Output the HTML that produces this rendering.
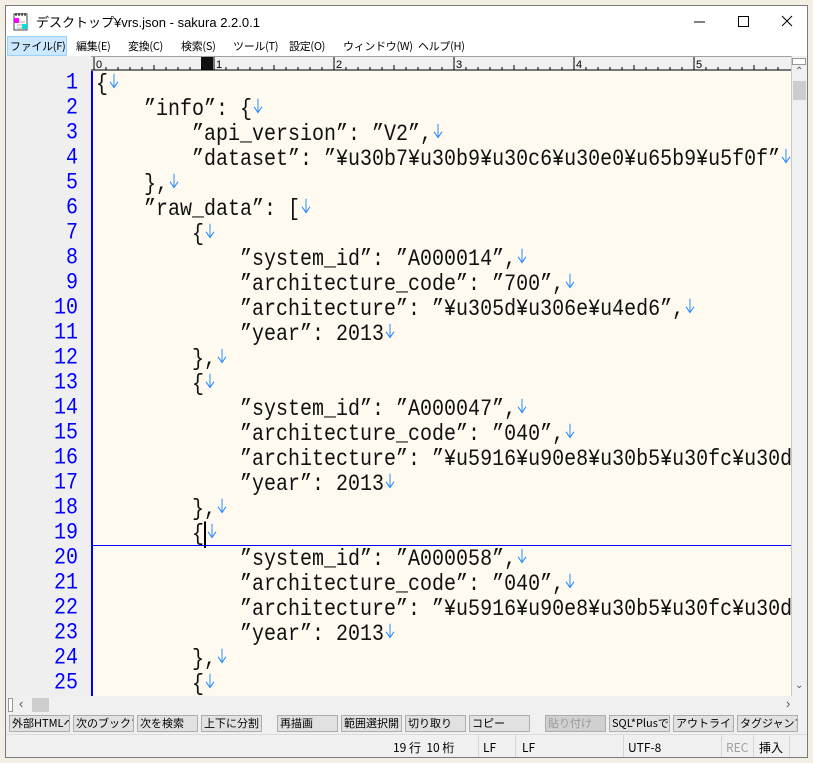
<!DOCTYPE html>
<html><head><meta charset="utf-8"><style>
*{margin:0;padding:0;box-sizing:border-box}
body{width:813px;height:763px;background:#f3efe4;position:relative;overflow:hidden;font-family:"Liberation Sans","Noto Sans CJK JP",sans-serif}
#win{position:absolute;left:5px;top:5px;width:803px;height:753px;background:#f0f0f0;border:1px solid #7a7a7a}
.abs{position:absolute}
#title{left:0;top:0;width:801px;height:30px;background:#fff;font-size:13px}
#menu{left:0;top:30px;width:801px;height:20px;background:#fff;font-size:11px;font-family:"Noto Sans CJK JP",sans-serif}
#menu span{position:absolute;top:2px;letter-spacing:-0.3px}
#gut{left:0;top:50px;width:85px;height:640px;background:#efefef}
#ruler{left:85px;top:50px;width:700px;height:15px;background:#f0f0f0;border-top:1px solid #a0a0a0}
#text{left:85px;top:65px;width:700px;height:625px;background:#fffaf0;overflow:hidden;border-left:2px solid #0000ff}
.ln{position:absolute;left:0;width:72px;text-align:right;color:#0000ff;font-family:"Liberation Mono",monospace;font-size:20px;height:25px;line-height:25px;transform:scaleY(1.15)}
.tl{position:absolute;left:3px;white-space:pre;font-family:"Liberation Mono",monospace;font-size:20px;height:25px;line-height:25px;color:#111;transform:scaleY(1.15)}
.a{display:inline-block;width:12px;height:20px;vertical-align:-2px;background:no-repeat center/12px 14px}
.a::before{content:"";}
.btn{position:absolute;top:709px;height:17px;background:#e1e1e1;border:1px solid #adadad;font-size:11px;line-height:15px;padding-left:2px;overflow:hidden;white-space:nowrap;font-family:"Noto Sans CJK JP",sans-serif}
.st{position:absolute;top:733px;font-size:12px;font-family:"Noto Sans CJK JP",sans-serif}
.sep{position:absolute;top:729px;width:1px;height:22px;background:#d5d5d5}
</style></head><body>
<svg width="0" height="0" style="position:absolute"><defs><symbol id="ar" viewBox="0 0 12 20"><path d="M6 4v12M2 11l4 5 4-5" fill="none" stroke="#2a8cff" stroke-width="1"/></symbol></defs></svg>
<div id="win">
<div id="title" class="abs">
<svg class="abs" style="left:6px;top:6px" width="18" height="20"><rect x="2" y="2" width="13" height="16" fill="#fff" stroke="#444"/><path d="M4 1v3M7 1v3M10 1v3M13 1v3" stroke="#000"/><path d="M5 10h8M5 13h8M5 16h6" stroke="#aaa"/><rect x="2" y="6" width="5" height="5" fill="#f0f"/><rect x="10" y="12" width="5" height="5" fill="#0dd"/></svg>
<span class="abs" style="left:30px;top:6px">デスクトップ¥vrs.json - sakura 2.2.0.1</span>
<svg class="abs" style="left:680px;top:8px" width="115" height="16"><path d="M8 8h11" stroke="#000"/><rect x="52.5" y="2.5" width="10" height="10" fill="none" stroke="#000"/><path d="M96 2l10 10M106 2l-10 10" stroke="#000"/></svg>
</div>
<div id="menu" class="abs">
<div class="abs" style="left:1px;top:0;width:60px;height:20px;background:#cce8ff;border:1px solid #99d1ff"></div>
<span style="left:4px">ファイル(F)</span><span style="left:70px">編集(E)</span><span style="left:122px">変換(C)</span><span style="left:175px">検索(S)</span><span style="left:227px">ツール(T)</span><span style="left:283px">設定(O)</span><span style="left:337px">ウィンドウ(W)</span><span style="left:412px">ヘルプ(H)</span>
</div>
<div id="gut" class="abs"></div>
<div id="ruler" class="abs">
<svg width="700" height="14" style="position:absolute;left:0;top:0">
<rect x="110" y="0" width="12" height="13" fill="#111"/>
<path d="M0 13H700" stroke="#000"/>
<path stroke="#000" d="M3 0v13M123 0v13M243 0v13M363 0v13M483 0v13M603 0v13 M15 10v3M27 10v3M39 10v3M51 10v3M63 8v5M75 10v3M87 10v3M99 10v3M111 10v3 M135 10v3M147 10v3M159 10v3M171 10v3M183 8v5M195 10v3M207 10v3M219 10v3M231 10v3 M255 10v3M267 10v3M279 10v3M291 10v3M303 8v5M315 10v3M327 10v3M339 10v3M351 10v3 M375 10v3M387 10v3M399 10v3M411 10v3M423 8v5M435 10v3M447 10v3M459 10v3M471 10v3 M495 10v3M507 10v3M519 10v3M531 10v3M543 8v5M555 10v3M567 10v3M579 10v3M591 10v3 M615 10v3M627 10v3M639 10v3M651 10v3M663 8v5M675 10v3M687 10v3"/>
<g font-size="11" font-family="Liberation Sans" fill="#000"><text x="5" y="11">0</text><text x="125" y="11">1</text><text x="245" y="11">2</text><text x="365" y="11">3</text><text x="485" y="11">4</text><text x="605" y="11">5</text></g>
</svg></div>
<div class="abs" style="left:0;top:65px;width:85px;height:625px">
<div class="ln" style="top:0">1</div><div class="ln" style="top:25px">2</div><div class="ln" style="top:50px">3</div><div class="ln" style="top:75px">4</div><div class="ln" style="top:100px">5</div><div class="ln" style="top:125px">6</div><div class="ln" style="top:150px">7</div><div class="ln" style="top:175px">8</div><div class="ln" style="top:200px">9</div><div class="ln" style="top:225px">10</div><div class="ln" style="top:250px">11</div><div class="ln" style="top:275px">12</div><div class="ln" style="top:300px">13</div><div class="ln" style="top:325px">14</div><div class="ln" style="top:350px">15</div><div class="ln" style="top:375px">16</div><div class="ln" style="top:400px">17</div><div class="ln" style="top:425px">18</div><div class="ln" style="top:450px">19</div><div class="ln" style="top:475px">20</div><div class="ln" style="top:500px">21</div><div class="ln" style="top:525px">22</div><div class="ln" style="top:550px">23</div><div class="ln" style="top:575px">24</div><div class="ln" style="top:600px">25</div>
</div>
<div id="text" class="abs">
<div class="tl" style="top:0">{<svg class="a"><use href="#ar"/></svg></div>
<div class="tl" style="top:25px">    ”info”: {<svg class="a"><use href="#ar"/></svg></div>
<div class="tl" style="top:50px">        ”api_version”: ”V2”,<svg class="a"><use href="#ar"/></svg></div>
<div class="tl" style="top:75px">        ”dataset”: ”¥u30b7¥u30b9¥u30c6¥u30e0¥u65b9¥u5f0f”<svg class="a"><use href="#ar"/></svg></div>
<div class="tl" style="top:100px">    },<svg class="a"><use href="#ar"/></svg></div>
<div class="tl" style="top:125px">    ”raw_data”: [<svg class="a"><use href="#ar"/></svg></div>
<div class="tl" style="top:150px">        {<svg class="a"><use href="#ar"/></svg></div>
<div class="tl" style="top:175px">            ”system_id”: ”A000014”,<svg class="a"><use href="#ar"/></svg></div>
<div class="tl" style="top:200px">            ”architecture_code”: ”700”,<svg class="a"><use href="#ar"/></svg></div>
<div class="tl" style="top:225px">            ”architecture”: ”¥u305d¥u306e¥u4ed6”,<svg class="a"><use href="#ar"/></svg></div>
<div class="tl" style="top:250px">            ”year”: 2013<svg class="a"><use href="#ar"/></svg></div>
<div class="tl" style="top:275px">        },<svg class="a"><use href="#ar"/></svg></div>
<div class="tl" style="top:300px">        {<svg class="a"><use href="#ar"/></svg></div>
<div class="tl" style="top:325px">            ”system_id”: ”A000047”,<svg class="a"><use href="#ar"/></svg></div>
<div class="tl" style="top:350px">            ”architecture_code”: ”040”,<svg class="a"><use href="#ar"/></svg></div>
<div class="tl" style="top:375px">            ”architecture”: ”¥u5916¥u90e8¥u30b5¥u30fc¥u30d3¥u30b9”,<svg class="a"><use href="#ar"/></svg></div>
<div class="tl" style="top:400px">            ”year”: 2013<svg class="a"><use href="#ar"/></svg></div>
<div class="tl" style="top:425px">        },<svg class="a"><use href="#ar"/></svg></div>
<div class="tl" style="top:450px">        {<span style="border-left:2px solid #000"></span><svg class="a"><use href="#ar"/></svg></div>
<div class="abs" style="left:0;top:474px;width:700px;height:1px;background:#0000ff;z-index:2"></div>
<div class="tl" style="top:475px">            ”system_id”: ”A000058”,<svg class="a"><use href="#ar"/></svg></div>
<div class="tl" style="top:500px">            ”architecture_code”: ”040”,<svg class="a"><use href="#ar"/></svg></div>
<div class="tl" style="top:525px">            ”architecture”: ”¥u5916¥u90e8¥u30b5¥u30fc¥u30d3¥u30b9”,<svg class="a"><use href="#ar"/></svg></div>
<div class="tl" style="top:550px">            ”year”: 2013<svg class="a"><use href="#ar"/></svg></div>
<div class="tl" style="top:575px">        },<svg class="a"><use href="#ar"/></svg></div>
<div class="tl" style="top:600px">        {<svg class="a"><use href="#ar"/></svg></div>
</div>
<div class="abs" style="left:785px;top:50px;width:16px;height:640px;background:#f0f0f0;border-left:1px solid #c8c8c8"></div>
<div class="abs" style="left:786px;top:52px;width:14px;height:7px;background:#fff;border:1px solid #999"></div>
<div class="abs" style="left:787px;top:75px;width:13px;height:19px;background:#cdcdcd"></div>
<div class="abs" style="left:789px;top:60px;font-size:10px;color:#555">&#8963;</div>
<div class="abs" style="left:789px;top:674px;font-size:10px;color:#555">&#8964;</div>
<div class="abs" style="left:0;top:690px;width:801px;height:17px;background:#f0f0f0"></div>
<div class="abs" style="left:2px;top:692px;width:5px;height:14px;background:#fff;border:1px solid #999"></div>
<div class="abs" style="left:13px;top:690px;font-size:13px;color:#555">‹</div>
<div class="abs" style="left:26px;top:692px;width:17px;height:14px;background:#cdcdcd"></div>
<div class="abs" style="left:780px;top:690px;font-size:13px;color:#555">›</div>
<div class="btn" style="left:3px;width:61px">外部HTMLへ</div>
<div class="btn" style="left:67px;width:61px">次のブックマ</div>
<div class="btn" style="left:131px;width:61px">次を検索</div>
<div class="btn" style="left:195px;width:61px">上下に分割</div>
<div class="btn" style="left:271px;width:61px">再描画</div>
<div class="btn" style="left:335px;width:61px">範囲選択開</div>
<div class="btn" style="left:399px;width:61px">切り取り</div>
<div class="btn" style="left:463px;width:61px">コピー</div>
<div class="btn" style="left:539px;width:61px;color:#9a9a9a;background:#d0d0d0">貼り付け</div>
<div class="btn" style="left:603px;width:61px">SQL*Plusで</div>
<div class="btn" style="left:667px;width:61px">アウトライン</div>
<div class="btn" style="left:731px;width:61px">タグジャンプ</div>
<div class="abs" style="left:0;top:728px;width:801px;height:1px;background:#dcdcdc"></div>
<div class="st" style="left:387px">19 行 &nbsp;10 桁</div>
<div class="sep" style="left:472px"></div>
<div class="st" style="left:477px">LF</div>
<div class="sep" style="left:509px"></div>
<div class="st" style="left:516px">LF</div>
<div class="sep" style="left:617px"></div>
<div class="st" style="left:622px">UTF-8</div>
<div class="sep" style="left:715px"></div>
<div class="st" style="left:720px;color:#a0a0a0">REC</div>
<div class="sep" style="left:747px"></div>
<div class="st" style="left:753px">挿入</div>
<div class="sep" style="left:783px"></div>
</div>
</body></html>
